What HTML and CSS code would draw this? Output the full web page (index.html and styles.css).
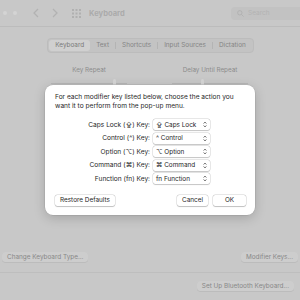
FILE: index.html
```html
<!DOCTYPE html>
<html>
<head>
<meta charset="utf-8">
<link rel="stylesheet" href="styles.css">
</head>
<body>
<div class="window">
  <div class="titlebar">
    <div class="lights"><span class="light"></span><span class="light"></span></div>
    <div class="nav">
      <svg width="8" height="10" viewBox="0 0 8 10"><path d="M6 1 L2 5 L6 9" fill="none" stroke="#b2b2b2" stroke-width="1.2"/></svg>
      <svg width="8" height="10" viewBox="0 0 8 10"><path d="M2 1 L6 5 L2 9" fill="none" stroke="#b2b2b2" stroke-width="1.2"/></svg>
    </div>
    <svg class="grid" width="9" height="9" viewBox="0 0 9 9" fill="#b0b0b0">
      <rect x="0" y="0" width="2" height="2"/><rect x="3.5" y="0" width="2" height="2"/><rect x="7" y="0" width="2" height="2"/>
      <rect x="0" y="3.5" width="2" height="2"/><rect x="3.5" y="3.5" width="2" height="2"/><rect x="7" y="3.5" width="2" height="2"/>
      <rect x="0" y="7" width="2" height="2"/><rect x="3.5" y="7" width="2" height="2"/><rect x="7" y="7" width="2" height="2"/>
    </svg>
    <div class="title">Keyboard</div>
    <div class="search">
      <svg width="7" height="7" viewBox="0 0 8 8"><circle cx="3.2" cy="3.2" r="2.5" fill="none" stroke="#b0b0b0" stroke-width="1"/><path d="M5 5 L7.5 7.5" stroke="#b0b0b0" stroke-width="1"/></svg>
      <span>Search</span>
    </div>
  </div>
  <div class="content">
    <div class="tabs">
      <span class="tab selected">Keyboard</span>
      <span class="tab">Text</span>
      <span class="sep"></span>
      <span class="tab">Shortcuts</span>
      <span class="sep"></span>
      <span class="tab">Input Sources</span>
      <span class="sep"></span>
      <span class="tab">Dictation</span>
    </div>
    <div class="sliders">
      <div class="slider-col left">
        <div class="slabel">Key Repeat</div>
        <div class="track"><span class="thumb thumb-left"></span></div>
      </div>
      <div class="slider-col right">
        <div class="slabel">Delay Until Repeat</div>
        <div class="track"><span class="thumb thumb-right"></span></div>
      </div>
    </div>
    <div class="spacer"></div>
    <div class="row-buttons">
      <span class="bbtn">Change Keyboard Type...</span>
      <span class="bbtn">Modifier Keys...</span>
    </div>
  </div>
  <div class="footer">
    <span class="bbtn">Set Up Bluetooth Keyboard...</span>
    <span class="bbtn stub"></span>
  </div>
</div>

<div class="dialog">
  <p class="intro">For each modifier key listed below, choose the action you want it to perform from the pop-up menu.</p>
  <div class="rows">
    <div class="row"><span class="lbl">Caps Lock (⇪) Key:</span><span class="popup"><span>⇪ Caps Lock</span><svg class="step" width="4" height="7" viewBox="0 0 4 7"><path d="M0.6 2.6 L2 1 L3.4 2.6 M0.6 4.4 L2 6 L3.4 4.4" fill="none" stroke="#444" stroke-width="0.7"/></svg></span></div>
    <div class="row"><span class="lbl">Control (^) Key:</span><span class="popup"><span>^ Control</span><svg class="step" width="4" height="7" viewBox="0 0 4 7"><path d="M0.6 2.6 L2 1 L3.4 2.6 M0.6 4.4 L2 6 L3.4 4.4" fill="none" stroke="#444" stroke-width="0.7"/></svg></span></div>
    <div class="row"><span class="lbl">Option (⌥) Key:</span><span class="popup"><span>⌥ Option</span><svg class="step" width="4" height="7" viewBox="0 0 4 7"><path d="M0.6 2.6 L2 1 L3.4 2.6 M0.6 4.4 L2 6 L3.4 4.4" fill="none" stroke="#444" stroke-width="0.7"/></svg></span></div>
    <div class="row"><span class="lbl">Command (⌘) Key:</span><span class="popup"><span>⌘ Command</span><svg class="step" width="4" height="7" viewBox="0 0 4 7"><path d="M0.6 2.6 L2 1 L3.4 2.6 M0.6 4.4 L2 6 L3.4 4.4" fill="none" stroke="#444" stroke-width="0.7"/></svg></span></div>
    <div class="row"><span class="lbl">Function (fn) Key:</span><span class="popup"><span>fn Function</span><svg class="step" width="4" height="7" viewBox="0 0 4 7"><path d="M0.6 2.6 L2 1 L3.4 2.6 M0.6 4.4 L2 6 L3.4 4.4" fill="none" stroke="#444" stroke-width="0.7"/></svg></span></div>
  </div>
  <div class="actions">
    <span class="btn">Restore Defaults</span>
    <span class="grow"></span>
    <span class="btn cancel">Cancel</span>
    <span class="btn ok">OK</span>
  </div>
</div>
</body>
</html>
```
FILE: styles.css
```css
html, body {
  margin: 0;
  padding: 0;
}
body {
  width: 300px;
  height: 300px;
  overflow: hidden;
  background: #c8c8c8;
  font-family: "Inter", "Liberation Sans", "DejaVu Sans", sans-serif;
  position: relative;
}
.window {
  display: flex;
  flex-direction: column;
  height: 300px;
}
.titlebar {
  height: 27px;
  box-sizing: border-box;
  border-bottom: 1px solid #bcbcbc;
  display: flex;
  align-items: center;
  padding-left: 3px;
}
.lights {
  display: flex;
  gap: 6px;
}
.light {
  width: 4px;
  height: 4px;
  border-radius: 50%;
  background: #d4d4d4;
}
.nav {
  display: flex;
  gap: 11px;
  margin-left: 15px;
}
.grid {
  margin-left: 13px;
}
.title {
  margin-left: 8px;
  font-size: 7.6px;
  font-weight: 700;
  color: #ababab;
}
.search {
  margin-left: auto;
  width: 72px;
  height: 13px;
  margin-right: -3px;
  border-radius: 4px;
  background: #c2c2c2;
  display: flex;
  align-items: center;
  gap: 4px;
  padding-left: 6px;
  box-sizing: border-box;
  font-size: 6.5px;
  color: #b3b3b3;
}
.content {
  flex: 1;
  display: flex;
  flex-direction: column;
  padding-top: 11px;
}
.tabs {
  align-self: center;
  margin-left: 1px;
  display: flex;
  align-items: center;
  height: 13px;
  padding: 0 1px;
  border-radius: 4px;
  background: #c3c3c3;
  border: 0.5px solid #bcbcbc;
  font-size: 6.4px;
  color: #858585;
}
.tab {
  padding: 0 6px;
  line-height: 11px;
}
.tab.selected {
  background: #d0d0d0;
  border-radius: 3px;
  color: #7a7a7a;
}
.sep {
  width: 1px;
  height: 7px;
  background: #b4b4b4;
}
.sliders {
  display: flex;
  justify-content: space-between;
  padding: 13px 52px 0 51px;
}
.slider-col {
  width: 76px;
  display: flex;
  flex-direction: column;
  align-items: center;
}
.slabel {
  font-size: 6.3px;
  color: #8c8c8c;
}
.track {
  margin-top: 9px;
  width: 76px;
  height: 1px;
  background: #b7b7b7;
  position: relative;
}
.thumb {
  position: absolute;
  top: -4px;
  width: 3px;
  height: 8px;
  border-radius: 2px;
  background: #d6d6d6;
}
.thumb-left { left: 62px; }
.thumb-right { left: 29px; }
.spacer {
  flex: 1;
}
.row-buttons {
  display: flex;
  justify-content: space-between;
  padding: 0 2px 10px 2px;
}
.bbtn {
  height: 10px;
  line-height: 10px;
  padding: 0 5px;
  border-radius: 3px;
  background: #cdcdcd;
  box-shadow: 0 0.5px 0.5px rgba(0,0,0,0.12);
  font-size: 6.4px;
  color: #888888;
}
.footer {
  height: 28px;
  box-sizing: border-box;
  border-top: 1px solid #bebebe;
  display: flex;
  justify-content: flex-end;
  gap: 6px;
  padding-top: 8px;
  margin-right: -6px;
}
.stub {
  width: 6px;
  padding: 0;
}
.dialog {
  position: absolute;
  left: 45px;
  top: 85px;
  width: 210px;
  height: 130px;
  box-sizing: border-box;
  background: #ffffff;
  border-radius: 8px;
  box-shadow: 0 3px 12px rgba(0,0,0,0.18), 0 0 0 0.5px rgba(0,0,0,0.12);
  padding: 8px 9px 9px 10px;
  display: flex;
  flex-direction: column;
  color: #262626;
}
.intro {
  margin: 0;
  font-size: 6.6px;
  line-height: 9px;
}
.rows {
  margin-top: 8px;
  display: flex;
  flex-direction: column;
  gap: 2.6px;
}
.row {
  display: flex;
  align-items: center;
  height: 11px;
}
.lbl {
  width: 95px;
  text-align: right;
  font-size: 6.6px;
}
.popup {
  margin-left: 3px;
  width: 57px;
  height: 11px;
  box-sizing: border-box;
  border-radius: 2.5px;
  background: #fff;
  box-shadow: 0 0 0 0.5px rgba(0,0,0,0.16), 0 0.5px 1px rgba(0,0,0,0.16);
  display: flex;
  align-items: center;
  justify-content: space-between;
  padding: 0 3px 0 3px;
  font-size: 6.4px;
}
.step {
  flex: none;
}
.actions {
  margin-top: auto;
  display: flex;
  align-items: center;
  gap: 5px;
}
.grow {
  flex: 1;
}
.btn {
  height: 11px;
  line-height: 11px;
  box-sizing: border-box;
  border-radius: 2.5px;
  background: #fff;
  box-shadow: 0 0 0 0.5px rgba(0,0,0,0.16), 0 0.5px 1px rgba(0,0,0,0.18);
  font-size: 6.4px;
  text-align: center;
  padding: 0 5px;
}
.cancel { width: 31px; padding: 0; }
.ok { width: 33px; padding: 0; }
```
